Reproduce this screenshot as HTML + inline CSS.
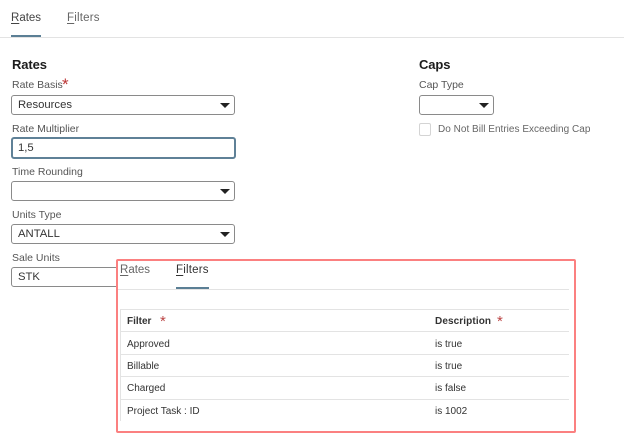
<!DOCTYPE html>
<html><head><meta charset="utf-8"><style>
html,body{margin:0;padding:0;background:#fff}
#p{position:relative;width:624px;height:444px;overflow:hidden;background:#fff;font-family:"Liberation Sans",sans-serif;color:#222}
#p div{position:absolute;box-sizing:border-box;white-space:nowrap}
.l{font-size:10.5px;line-height:14px;color:#555}
.h{font-size:13px;line-height:16px;font-weight:bold;color:#1c1c1c;letter-spacing:-.1px}
.tab{font-size:11.5px;line-height:14px;color:#666}
.s{left:11px;width:224px;height:20px;border:1px solid #8a8a8a;border-radius:3px;background:#fff;font-size:11.3px;line-height:18px;padding-left:6px;color:#333}
.a{width:0;height:0;border-left:5px solid transparent;border-right:5px solid transparent;border-top:5px solid #222}
.line{height:1px;background:#e3e3e3}
.c{font-size:10px;line-height:14px;color:#333}
.st{color:#b44;font-size:15px;line-height:14px}
u{text-underline-offset:2px}
</style></head><body><div id="p">
<div class="tab" style="left:11px;top:11px;color:#444"><u>R</u>ates</div>
<div class="tab" style="left:67px;top:11px;letter-spacing:.2px"><u>F</u>ilters</div>
<div style="left:11px;top:35px;width:30px;height:2px;background:#5b7f95"></div>
<div class="line" style="left:0;top:37px;width:624px"></div>

<div class="h" style="left:12px;top:57px">Rates</div>
<div class="l" style="left:12px;top:78px">Rate Basis</div>
<div style="left:62px;top:77px;color:#b33;font-size:17px;line-height:15px">*</div>
<div class="s" style="top:95px">Resources</div>
<div class="a" style="left:220px;top:103px"></div>
<div class="l" style="left:12px;top:122px">Rate Multiplier</div>
<div class="s" style="top:137px;width:225px;height:22px;border:2px solid #5f8197;line-height:19px;padding-left:5px">1,5</div>
<div class="l" style="left:12px;top:165px">Time Rounding</div>
<div class="s" style="top:181px"></div>
<div class="a" style="left:220px;top:189px"></div>
<div class="l" style="left:12px;top:208px">Units Type</div>
<div class="s" style="top:224px">ANTALL</div>
<div class="a" style="left:220px;top:232px"></div>
<div class="l" style="left:12px;top:251px">Sale Units</div>
<div class="s" style="top:267px">STK</div>

<div class="h" style="left:419px;top:57px">Caps</div>
<div class="l" style="left:419px;top:78px">Cap Type</div>
<div class="s" style="left:419px;top:95px;width:75px"></div>
<div class="a" style="left:479px;top:103px"></div>
<div style="left:419px;top:123px;width:12px;height:13px;border:1px solid #d4d4d4;border-radius:2px"></div>
<div class="l" style="left:438px;top:123px;color:#666;font-size:10px;letter-spacing:.02px">Do Not Bill Entries Exceeding Cap</div>

<div style="left:116px;top:259px;width:460px;height:174px;border:2px solid #fb8080;border-radius:2px;background:#fff"></div>
<div class="tab" style="left:120px;top:263px"><u>R</u>ates</div>
<div class="tab" style="left:176px;top:263px;color:#333;letter-spacing:.2px"><u>F</u>ilters</div>
<div style="left:176px;top:287px;width:33px;height:2px;background:#5b7f95"></div>
<div class="line" style="left:118px;top:289px;width:451px"></div>
<div class="line" style="left:120px;top:309px;width:449px"></div>
<div class="line" style="left:120px;top:331px;width:449px"></div>
<div class="line" style="left:120px;top:354px;width:449px"></div>
<div class="line" style="left:120px;top:376px;width:449px"></div>
<div class="line" style="left:120px;top:399px;width:449px"></div>
<div style="left:120px;top:309px;width:1px;height:112px;background:#e3e3e3"></div>
<div class="c" style="left:127px;top:315px;font-weight:bold">Filter</div>
<div class="st" style="left:160px;top:315px">*</div>
<div class="c" style="left:435px;top:315px;font-weight:bold;letter-spacing:.1px">Description</div>
<div class="st" style="left:497px;top:315px">*</div>
<div class="c" style="left:127px;top:338px">Approved</div><div class="c" style="left:435px;top:338px">is true</div>
<div class="c" style="left:127px;top:360px">Billable</div><div class="c" style="left:435px;top:360px">is true</div>
<div class="c" style="left:127px;top:382px">Charged</div><div class="c" style="left:435px;top:382px">is false</div>
<div class="c" style="left:127px;top:405px">Project Task : ID</div><div class="c" style="left:435px;top:405px">is 1002</div>
</div></body></html>
